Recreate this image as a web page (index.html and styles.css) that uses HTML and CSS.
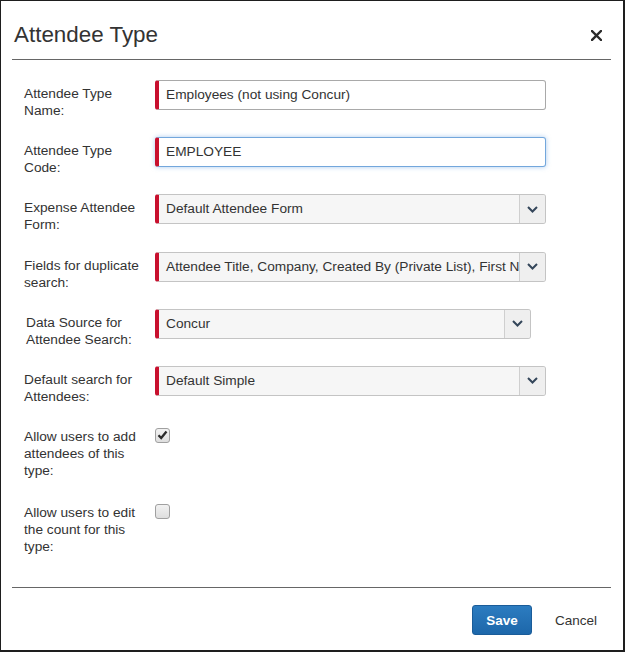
FILE: index.html
```html
<!DOCTYPE html>
<html>
<head>
<meta charset="utf-8">
<link rel="stylesheet" href="styles.css">
</head>
<body>
<div class="frame">
  <div class="header">
    <h1 class="title">Attendee Type</h1>
    <button class="close" aria-label="Close">
      <svg width="11" height="11" viewBox="0 0 11 11"><path d="M1 1 L10 10 M10 1 L1 10" stroke="#2b2b2b" stroke-width="2.4" stroke-linecap="square"/></svg>
    </button>
  </div>
  <div class="form">
    <div class="row">
      <div class="label">Attendee Type Name:</div>
      <div class="control input required">Employees (not using Concur)</div>
    </div>
    <div class="row">
      <div class="label">Attendee Type Code:</div>
      <div class="control input required focused">EMPLOYEE</div>
    </div>
    <div class="row">
      <div class="label">Expense Attendee Form:</div>
      <div class="control select required"><span class="value">Default Attendee Form</span><span class="caret"><svg width="11" height="7" viewBox="0 0 11 7"><path d="M1 1 L5.5 5.5 L10 1" fill="none" stroke="#34465a" stroke-width="2"/></svg></span></div>
    </div>
    <div class="row">
      <div class="label">Fields for duplicate search:</div>
      <div class="control select required"><span class="value">Attendee Title, Company, Created By (Private List), First Name, Last Name</span><span class="caret"><svg width="11" height="7" viewBox="0 0 11 7"><path d="M1 1 L5.5 5.5 L10 1" fill="none" stroke="#34465a" stroke-width="2"/></svg></span></div>
    </div>
    <div class="row">
      <div class="label shifted">Data Source for Attendee Search:</div>
      <div class="control select required narrow"><span class="value">Concur</span><span class="caret"><svg width="11" height="7" viewBox="0 0 11 7"><path d="M1 1 L5.5 5.5 L10 1" fill="none" stroke="#34465a" stroke-width="2"/></svg></span></div>
    </div>
    <div class="row last-field">
      <div class="label">Default search for Attendees:</div>
      <div class="control select required"><span class="value">Default Simple</span><span class="caret"><svg width="11" height="7" viewBox="0 0 11 7"><path d="M1 1 L5.5 5.5 L10 1" fill="none" stroke="#34465a" stroke-width="2"/></svg></span></div>
    </div>
    <div class="row check-row">
      <div class="label tight">Allow users to add attendees of this type:</div>
      <span class="checkbox"><svg width="11" height="10" viewBox="0 0 11 10"><path d="M1.5 5.2 L4.2 8 L9.5 1.5" fill="none" stroke="#2a2a2a" stroke-width="2.3"/></svg></span>
    </div>
    <div class="row check-row">
      <div class="label tight">Allow users to edit the count for this type:</div>
      <span class="checkbox"></span>
    </div>
  </div>
  <div class="footer">
    <button class="btn save">Save</button>
    <button class="btn cancel">Cancel</button>
  </div>
</div>
</body>
</html>
```
FILE: styles.css
```css
* { box-sizing: border-box; }
html, body { margin: 0; padding: 0; background: #fff; }
body { font-family: "Liberation Sans", Arial, sans-serif; color: #333; }

.frame {
  width: 625px;
  height: 652px;
  border: 1px solid #1e1e1e;
  border-right-width: 2px;
  border-bottom-width: 2px;
  padding: 0 12px 0 11px;
  display: flex;
  flex-direction: column;
}

.header {
  display: flex;
  align-items: center;
  justify-content: space-between;
  padding: 21px 0 11px 2px;
  border-bottom: 1px solid #666;
  flex: none;
}
.title {
  margin: 0;
  font-size: 22.4px;
  line-height: 26px;
  font-weight: normal;
  color: #333;
}
.close {
  border: 0;
  background: none;
  padding: 0;
  margin-right: 9px;
  width: 11px;
  height: 11px;
  display: flex;
}

.form {
  padding: 20px 0 0 12px;
  flex: 1;
}
.row {
  display: flex;
  align-items: flex-start;
  height: 30px;
  margin-bottom: 27.2px;
}
.row.last-field { margin-bottom: 32px; }
.row.check-row { height: 51px; margin-bottom: 25px; }

.label {
  width: 131px;
  flex: none;
  font-size: 13.7px;
  line-height: 17px;
  padding: 5px 10px 0 0;
  color: #333;
}
.label.shifted { padding-left: 2px; }
.label.tight { padding-top: 0; }

.control {
  width: 391px;
  height: 30px;
  border: 1px solid #a9a9a9;
  border-left: 4px solid #c8102e;
  border-radius: 3px;
  font-size: 13.7px;
  line-height: 28px;
  color: #333;
  padding-left: 7px;
  background: #fff;
}
.control.focused {
  border-color: #73a7dc;
  border-left-color: #c8102e;
  box-shadow: 0 0 5px rgba(102, 160, 225, 0.55);
}
.select {
  display: flex;
  padding-left: 0;
  background: #f6f6f6;
  border-color: #c4c4c4;
  border-left-color: #c8102e;
}
.select.narrow { width: 376px; }
.select .value {
  flex: 1;
  padding-left: 7px;
  white-space: nowrap;
  overflow: hidden;
}
.caret {
  width: 26px;
  flex: none;
  border-left: 1px solid #cfcfcf;
  background: #efefef;
  border-radius: 0 2px 2px 0;
  display: flex;
  align-items: center;
  justify-content: center;
}

.checkbox {
  width: 15px;
  height: 15px;
  flex: none;
  border: 1px solid #a0a0a0;
  border-radius: 3px;
  background: linear-gradient(#f2f2f2, #dedede);
  display: flex;
  align-items: center;
  justify-content: center;
}

.footer {
  border-top: 1px solid #666;
  height: 63px;
  flex: none;
  display: flex;
  justify-content: flex-end;
  align-items: flex-start;
  padding-top: 17px;
  gap: 9px;
}
.btn {
  font-family: "Liberation Sans", Arial, sans-serif;
  font-size: 13.5px;
  height: 30px;
  border-radius: 3px;
  cursor: pointer;
}
.save {
  width: 60px;
  background: linear-gradient(#2c7cc0, #1d67aa);
  border: 1px solid #1a5c99;
  color: #fff;
  font-weight: bold;
}
.cancel {
  width: 70px;
  background: none;
  border: 0;
  color: #333;
}
```
